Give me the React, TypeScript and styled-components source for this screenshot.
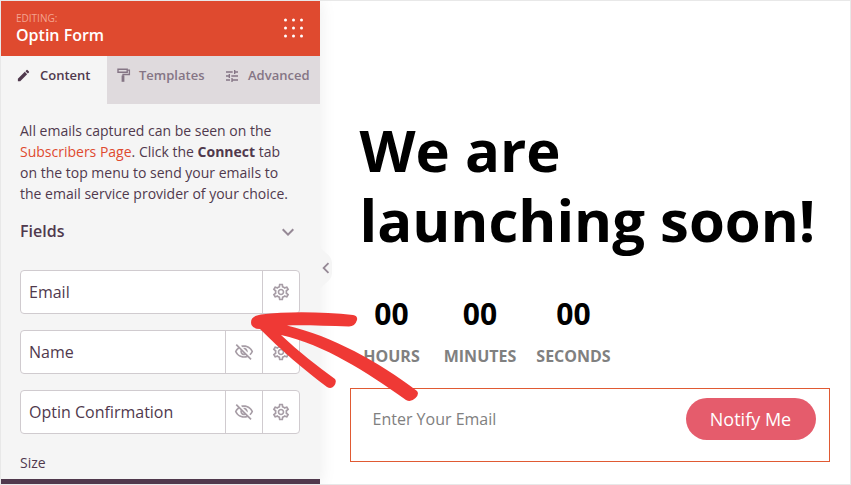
import styled, { createGlobalStyle } from "styled-components";
import {
  MdEdit,
  MdTune,
  MdKeyboardArrowDown,
  MdKeyboardArrowLeft,
  MdOutlineSettings,
  MdOutlineVisibilityOff,
} from "react-icons/md";

type FieldType = {
  label: string;
  hideable: boolean;
};

const fields: FieldType[] = [
  { label: "Email", hideable: false },
  { label: "Name", hideable: true },
  { label: "Optin Confirmation", hideable: true },
];

const counters = ["HOURS", "MINUTES", "SECONDS"];

const RollerIcon = () => (
  <svg width="14" height="15" viewBox="0 0 14 15" fill="none" stroke="currentColor">
    <path d="M1 1.2h9.2v3H1z" strokeWidth="1.4" />
    <path d="M10.2 2.2h2.2v4.3H6v1.8" strokeWidth="1.3" />
    <path d="M6 7.5v6.3" strokeWidth="2.8" />
  </svg>
);

const DotsIcon = () => (
  <svg width="20" height="20" viewBox="0 0 20 20" fill="#fff">
    {[2, 10, 18].map((y) =>
      [1.5, 9.5, 17.5].map((x) => <circle key={`${x}-${y}`} cx={x} cy={y} r="1.5" />)
    )}
  </svg>
);

const App = () => {
  return (
    <>
      <GlobalStyle />
      <Page>
        <Sidebar>
          <Header>
            <div>
              <Editing>EDITING:</Editing>
              <BlockName>Optin Form</BlockName>
            </div>
            <DotsIcon />
          </Header>
          <Tabs>
            <Tab $active $width={106}>
              <MdEdit size={15} />
              Content
            </Tab>
            <Tab $width={107}>
              <RollerIcon />
              Templates
            </Tab>
            <Tab $width={106}>
              <MdTune size={16} />
              Advanced
            </Tab>
          </Tabs>
          <Panel>
            <Intro>
              All emails captured can be seen on the <a>Subscribers Page</a>. Click the{" "}
              <b>Connect</b> tab on the top menu to send your emails to the email service
              provider of your choice.
            </Intro>
            <SectionTitle>
              Fields
              <MdKeyboardArrowDown size={24} />
            </SectionTitle>
            <FieldList>
              {fields.map((field) => (
                <Field key={field.label}>
                  <FieldLabel>{field.label}</FieldLabel>
                  {field.hideable && (
                    <FieldButton>
                      <MdOutlineVisibilityOff size={20} />
                    </FieldButton>
                  )}
                  <FieldButton>
                    <MdOutlineSettings size={20} />
                  </FieldButton>
                </Field>
              ))}
            </FieldList>
            <SizeLabel>Size</SizeLabel>
          </Panel>
          <BottomBar />
          <Handle>
            <svg width="13" height="46" viewBox="0 0 13 46">
              <path d="M0 0C1 7 12 9 12 18v10C12 37 1 39 0 46z" fill="#f5f5f5" />
            </svg>
            <HandleArrow>
              <MdKeyboardArrowLeft size={22} />
            </HandleArrow>
          </Handle>
        </Sidebar>
        <Preview>
          <Title>
            We are
            <br />
            launching soon!
          </Title>
          <Countdown>
            {counters.map((name) => (
              <Counter key={name}>
                <Digits>00</Digits>
                <Unit>{name}</Unit>
              </Counter>
            ))}
          </Countdown>
          <OptinForm>
            <Placeholder>Enter Your Email</Placeholder>
            <Notify>Notify Me</Notify>
          </OptinForm>
        </Preview>
        <Arrow width="180" height="96" viewBox="245 308 180 96" fill="#ef3935">
          <path d="M251.5 325C249.500 319 254 315.500 261 314.500C289 311 325 312 353 315Q358 316 357 320Q355 326.500 349 326.500C327 326 306 325 287 325.500C332 336 379 362 417 391Q419.500 394 415.500 398Q411 402.500 406 400C365 371 325 345 281 335C299 352 317 366 335 379Q337 382 334 386Q331 389.500 327 387C303 369 281 350 260 329Q253.500 329 251.500 325Z" />
        </Arrow>
      </Page>
    </>
  );
};

export default App;

const GlobalStyle = createGlobalStyle`
  * {
    box-sizing: border-box;
  }

  body {
    margin: 0;
    font-family: "Open Sans", "Noto Sans", sans-serif;
  }

  svg {
    display: block;
    flex-shrink: 0;
  }
`;

const Page = styled.div`
  position: relative;
  width: 851px;
  height: 485px;
  display: flex;
  overflow: hidden;
  border: 1px solid #e8e8e8;
  background: #fff;
`;

const Sidebar = styled.div`
  position: relative;
  width: 319px;
  flex-shrink: 0;
  display: flex;
  flex-direction: column;
  background: #f5f5f5;
  color: #50394d;
  box-shadow: 0 0 16px rgba(0, 0, 0, 0.08);
`;

const Header = styled.div`
  height: 55px;
  padding: 0 16px 0 15px;
  display: flex;
  align-items: center;
  justify-content: space-between;
  background: #df4a2f;
  color: #fff;

  svg {
    margin-bottom: 1px;
  }
`;

const Editing = styled.div`
  padding-top: 1px;
  font-size: 10px;
  line-height: 13px;
  color: #f4a48f;
`;

const BlockName = styled.div`
  font-size: 16px;
  font-weight: 600;
  line-height: 21px;
`;

const Tabs = styled.div`
  height: 48px;
  display: flex;
  background: #dfdadd;
`;

const Tab = styled.div<{ $active?: boolean; $width: number }>`
  width: ${({ $width }) => $width}px;
  padding: 10px 0 0 ${({ $active }) => ($active ? 15 : 10)}px;
  display: flex;
  align-items: flex-start;
  gap: ${({ $active }) => ($active ? 9 : 8)}px;
  font-size: 13px;
  font-weight: 600;
  line-height: 18px;
  background: ${({ $active }) => ($active ? "#f5f5f5" : "transparent")};
  color: ${({ $active }) => ($active ? "#50394d" : "#857585")};

  svg {
    margin-top: 2px;
  }
`;

const Panel = styled.div`
  flex: 1;
  padding: 16px 20px 0 19px;
`;

const Intro = styled.p`
  margin: 0;
  font-size: 14px;
  line-height: 21px;

  a {
    color: #df4a2f;
  }
`;

const SectionTitle = styled.div`
  height: 24px;
  margin-top: 15px;
  display: flex;
  align-items: center;
  justify-content: space-between;
  font-size: 16px;
  font-weight: 600;

  svg {
    margin-top: 2px;
    color: #968996;
  }
`;

const FieldList = styled.div`
  margin-top: 27px;
  display: flex;
  flex-direction: column;
  gap: 16px;
`;

const Field = styled.div`
  height: 44px;
  display: flex;
  border: 1px solid #d0cbcf;
  border-radius: 4px;
  background: #fff;
`;

const FieldLabel = styled.div`
  flex: 1;
  padding-left: 8px;
  font-size: 16px;
  line-height: 42px;
`;

const FieldButton = styled.div`
  width: 37px;
  display: flex;
  align-items: center;
  justify-content: center;
  border-left: 1px solid #d0cbcf;
  color: #a79da6;
`;

const SizeLabel = styled.div`
  margin-top: 19px;
  font-size: 14px;
  line-height: 20px;
`;

const BottomBar = styled.div`
  height: 5px;
  background: #50394d;
`;

const Handle = styled.div`
  position: absolute;
  top: 244px;
  left: 319px;
`;

const HandleArrow = styled.div`
  position: absolute;
  top: 12px;
  left: -5px;
  color: #968996;
`;

const Preview = styled.div`
  flex: 1;
  padding: 114px 20px 0 30px;
`;

const Title = styled.h1`
  margin: 0 0 0 9.5px;
  font-size: 58px;
  font-weight: 700;
  line-height: 70px;
  white-space: nowrap;
  color: #000;
`;

const Countdown = styled.div`
  margin: 38px 0 0 10px;
  display: grid;
  grid-template-columns: 63px 74px 73px;
  column-gap: 20px;
`;

const Counter = styled.div`
  display: flex;
  flex-direction: column;
  align-items: center;
`;

const Digits = styled.div`
  font-size: 30px;
  font-weight: 700;
  line-height: 42px;
  color: #000;
`;

const Unit = styled.div`
  margin-top: 10px;
  font-size: 16px;
  font-weight: 700;
  line-height: 22px;
  color: #808080;
`;

const OptinForm = styled.div`
  height: 74px;
  margin-top: 21px;
  padding: 9px 13px 0 21.5px;
  display: flex;
  align-items: flex-start;
  justify-content: space-between;
  border: 1px solid #e05a33;
`;

const Placeholder = styled.div`
  font-size: 16px;
  line-height: 42px;
  color: #808080;
`;

const Notify = styled.div`
  width: 130px;
  height: 42px;
  padding-right: 1px;
  border-radius: 21px;
  text-align: center;
  font-size: 18px;
  line-height: 42px;
  background: #e55c6c;
  color: #fff;
`;

const Arrow = styled.svg`
  position: absolute;
  top: 307px;
  left: 244px;
`;
